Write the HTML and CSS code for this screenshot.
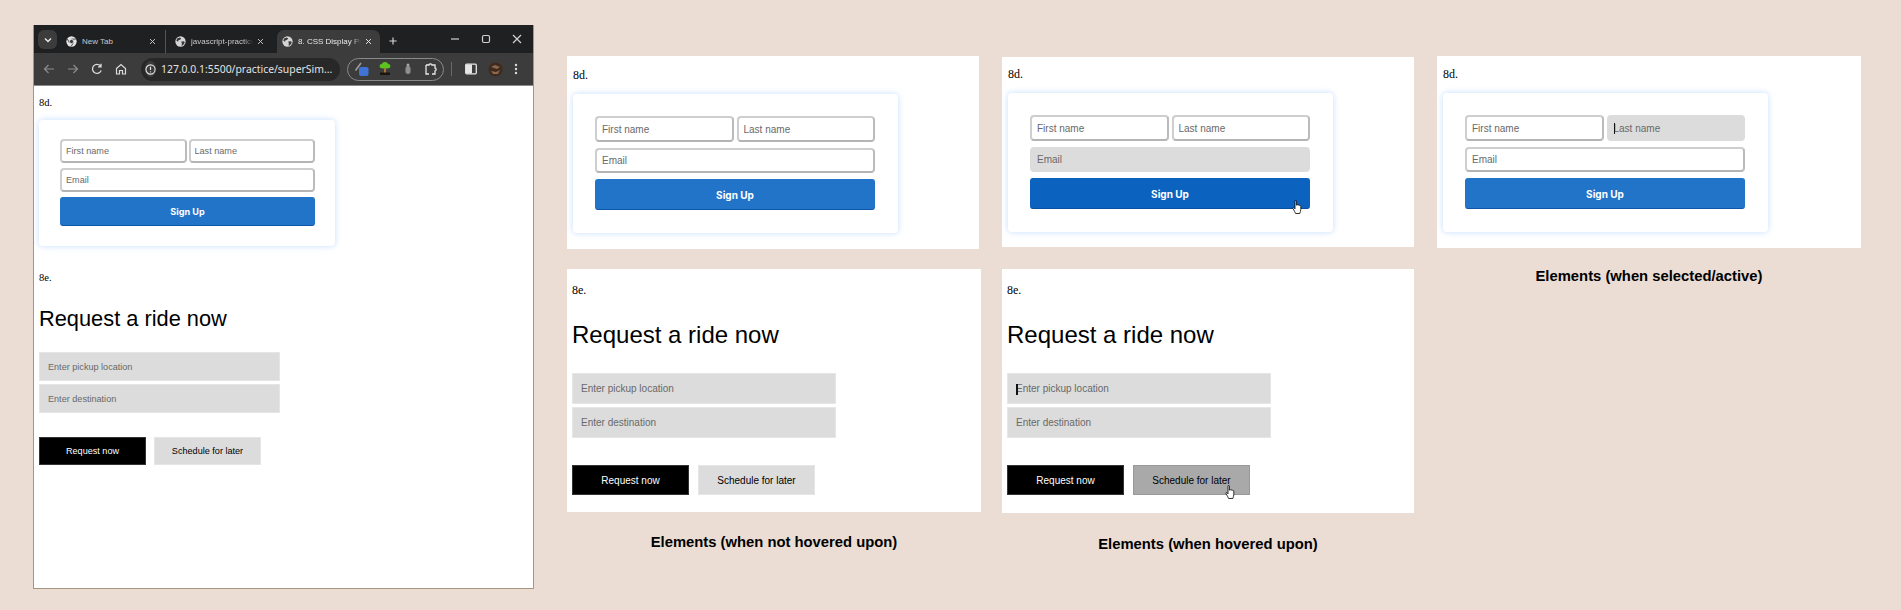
FILE: index.html
```html
<!DOCTYPE html>
<html lang="en">
<head>
    <meta charset="UTF-8">
    <meta name="viewport" content="width=device-width, initial-scale=1.0">
    <title>CSS Display Practice - Elements</title>
    <link rel="stylesheet" href="styles.css">
</head>
<body>
    <svg class="icon-defs" width="0" height="0" aria-hidden="true">
        <symbol id="globe" viewBox="0 0 16 16">
            <circle cx="8" cy="8" r="7.5" fill="#d5d5d5"/>
            <path d="M3 3.5 7 2l2 1.5-1.5 2L5 6l-.5 2.5L2 7zM9 8l4.5-.5L14 10l-2.5 3.5L9.5 14l.5-3z" fill="#3a3a3a"/>
        </symbol>
        <symbol id="close" viewBox="0 0 10 10">
            <path d="M1.5 1.5l7 7M8.5 1.5l-7 7" fill="none" stroke="currentColor" stroke-width="1.4"/>
        </symbol>
        <symbol id="hand" viewBox="0 0 10 14">
            <path d="M3 1c0-.8 1.4-.8 1.4 0v4.2c.5-.6 1.3-.5 1.5 0 .5-.4 1.2-.3 1.4.2.6-.3 1.5 0 1.5.8v3.300c0 1.500-.7 2.500-1 4H3.600C3.200 12 1.900 10.500 1 8.700c-.4-.9.5-1.500 1.200-.8l.8.9z" fill="#fff" stroke="#000" stroke-width=".8"/>
        </symbol>
    </svg>

    <div class="browser">
        <div class="tabstrip">
            <div class="tab-search">
                <svg width="8" height="6" viewBox="0 0 8 6"><path d="M1 1.5l3 3 3-3" fill="none" stroke="#e6e6e6" stroke-width="1.5"/></svg>
            </div>
            <div class="tab tab-newtab">
                <svg class="favicon" viewBox="0 0 16 16">
                    <circle cx="8" cy="8" r="7.5" fill="#e4e4e4"/>
                    <path d="M8 4.5h6.500M5 9.700 1.800 4.300M10.800 9.800 7.500 15" stroke="#3a3a3a" stroke-width="1.3"/>
                    <circle cx="8" cy="8" r="3" fill="#3a3a3a" stroke="#e4e4e4"/>
                </svg>
                <span class="tab-title">New Tab</span>
                <svg class="tab-close"><use href="#close"/></svg>
            </div>
            <div class="tab tab-repo">
                <svg class="favicon"><use href="#globe"/></svg>
                <span class="tab-title tab-title-fade">javascript-practice</span>
                <svg class="tab-close"><use href="#close"/></svg>
            </div>
            <div class="tab tab-active">
                <svg class="favicon"><use href="#globe"/></svg>
                <span class="tab-title tab-title-fade">8. CSS Display Practice</span>
                <svg class="tab-close"><use href="#close"/></svg>
            </div>
            <svg class="new-tab" width="8" height="8" viewBox="0 0 10 10"><path d="M5 .5v9M.5 5h9" stroke="#d8d8d8" stroke-width="1.4"/></svg>
            <div class="window-controls">
                <svg width="10" height="10" viewBox="0 0 10 10"><path d="M1 5h8" stroke="#d0d0d0" stroke-width="1.2"/></svg>
                <svg width="10" height="10" viewBox="0 0 10 10"><rect x="1.5" y="1.5" width="7" height="7" rx="1.5" fill="none" stroke="#d0d0d0" stroke-width="1.2"/></svg>
                <svg width="10" height="10" viewBox="0 0 10 10"><path d="M1 1l8 8M9 1 1 9" stroke="#d0d0d0" stroke-width="1.2"/></svg>
            </div>
        </div>

        <div class="toolbar">
            <svg class="nav-icon" viewBox="0 0 12 12"><path d="M11 6H1.500M5.500 2 1.500 6l4 4" fill="none" stroke="#8c8c8c" stroke-width="1.2"/></svg>
            <svg class="nav-icon" viewBox="0 0 12 12"><path d="M1 6h9.500M6.500 2l4 4-4 4" fill="none" stroke="#8c8c8c" stroke-width="1.2"/></svg>
            <svg class="nav-icon" viewBox="0 0 12 12"><path d="M10.200 7.500A4.500 4.500 0 1 1 9.500 3M10 .8v3H7" fill="none" stroke="#dcdcdc" stroke-width="1.3"/></svg>
            <svg class="nav-icon" viewBox="0 0 12 12"><path d="M1.500 5.500 6 1.500l4.500 4V11h-3V7.500h-3V11h-3z" fill="none" stroke="#dcdcdc" stroke-width="1.2"/></svg>
            <div class="omnibox">
                <span class="site-info">
                    <svg width="11" height="11" viewBox="0 0 12 12"><circle cx="6" cy="6" r="5" fill="none" stroke="#e6e6e6" stroke-width="1.2"/><path d="M6 3v3.500" stroke="#e6e6e6" stroke-width="1.3"/><circle cx="6" cy="8.5" r=".7" fill="#e6e6e6"/></svg>
                </span>
                <span class="url">127.0.0.1:5500/practice/superSim...</span>
                <svg width="12" height="12" viewBox="0 0 12 12"><path d="M6 1l1.500 3.400 3.700.4-2.800 2.400.8 3.600L6 8.900 2.800 10.800l.8-3.600L.8 4.800l3.700-.4z" fill="none" stroke="#e6e6e6" stroke-width="1.1"/></svg>
            </div>
            <div class="extensions">
                <svg class="ext-icon" viewBox="0 0 14 14">
                    <path d="M.5 8.500 6 1" stroke="#9a9a9a" stroke-width="1.6"/>
                    <rect x="4" y="5" width="9.500" height="9" rx="2" fill="#3f74d6"/>
                </svg>
                <svg class="ext-icon" viewBox="0 0 14 14">
                    <path d="M7 0c2 0 3 1 3 2 2 0 3 1.500 2 3.500-1 1.500-9 1.500-10 0C1 3.500 2 2 4 2c0-1 1-2 3-2z" fill="#5fc11f"/>
                    <path d="M6 6.500h2V11H6z" fill="#b0743a"/>
                    <path d="M2 10.500h10V13H2z" fill="#1c1510"/>
                </svg>
                <svg class="ext-icon" viewBox="0 0 14 14"><rect x="4.500" y="4" width="5" height="8" rx="2.500" fill="#8f8f8f"/><circle cx="7" cy="3" r="1.500" fill="#a5a5a5"/></svg>
                <svg class="ext-icon" viewBox="0 0 14 14"><path d="M2 3h3c0-1.500 3-1.500 3 0h3v3c1.500 0 1.500 3 0 3v3H8M5 12H2V3" fill="none" stroke="#e6e6e6" stroke-width="1.3"/></svg>
            </div>
            <span class="toolbar-sep"></span>
            <svg class="side-panel" width="12" height="12" viewBox="0 0 12 12"><rect x=".7" y="1.200" width="10.600" height="9.600" rx="1" fill="none" stroke="#e6e6e6" stroke-width="1.3"/><rect x="1" y="1.500" width="6" height="9" fill="#e6e6e6"/></svg>
            <svg class="avatar" width="15" height="15" viewBox="0 0 15 15">
                <circle cx="7.5" cy="7.5" r="7" fill="#3f2a1d"/>
                <path d="M3 5l4-2 5 2-3 2zM3 9l5 1 4-2-2 4-5 0z" fill="#8a6a4c"/>
            </svg>
            <svg class="menu-dots" width="4" height="12" viewBox="0 0 4 12"><circle cx="2" cy="2" r="1.200" fill="#dcdcdc"/><circle cx="2" cy="6" r="1.200" fill="#dcdcdc"/><circle cx="2" cy="10" r="1.200" fill="#dcdcdc"/></svg>
        </div>

        <div class="page">
            <p class="label">8d.</p>
            <div class="signup-card">
                <div class="signup-form">
                    <input class="field" type="text" placeholder="First name">
                    <input class="field" type="text" placeholder="Last name">
                    <input class="field field-wide" type="text" placeholder="Email">
                    <button class="signup-btn">Sign Up</button>
                </div>
            </div>
            <p class="label label-ride">8e.</p>
            <h2 class="ride-title">Request a ride now</h2>
            <div class="ride-fields">
                <input class="ride-input" type="text" placeholder="Enter pickup location">
                <input class="ride-input" type="text" placeholder="Enter destination">
            </div>
            <div class="ride-actions">
                <button class="ride-btn ride-btn-dark">Request now</button>
                <button class="ride-btn">Schedule for later</button>
            </div>
        </div>
    </div>

    <div class="column column-idle">
        <section class="panel panel-signup">
            <p class="label">8d.</p>
            <div class="signup-card">
                <div class="signup-form">
                    <input class="field" type="text" placeholder="First name">
                    <input class="field" type="text" placeholder="Last name">
                    <input class="field field-wide" type="text" placeholder="Email">
                    <button class="signup-btn">Sign Up</button>
                </div>
            </div>
        </section>
        <section class="panel panel-ride">
            <p class="label">8e.</p>
            <h2 class="ride-title">Request a ride now</h2>
            <div class="ride-fields">
                <input class="ride-input" type="text" placeholder="Enter pickup location">
                <input class="ride-input" type="text" placeholder="Enter destination">
            </div>
            <div class="ride-actions">
                <button class="ride-btn ride-btn-dark">Request now</button>
                <button class="ride-btn">Schedule for later</button>
            </div>
        </section>
        <h3 class="caption">Elements (when not hovered upon)</h3>
    </div>

    <div class="column column-hover">
        <section class="panel panel-signup">
            <p class="label">8d.</p>
            <div class="signup-card">
                <div class="signup-form">
                    <input class="field" type="text" placeholder="First name">
                    <input class="field" type="text" placeholder="Last name">
                    <input class="field field-wide field-grey" type="text" placeholder="Email">
                    <button class="signup-btn signup-btn-hover">
                        Sign Up
                        <svg class="hand hand-signup"><use href="#hand"/></svg>
                    </button>
                </div>
            </div>
        </section>
        <section class="panel panel-ride">
            <p class="label">8e.</p>
            <h2 class="ride-title">Request a ride now</h2>
            <div class="ride-fields">
                <div class="caret-wrap">
                    <input class="ride-input" type="text" placeholder="Enter pickup location">
                    <span class="caret caret-ride"></span>
                </div>
                <input class="ride-input" type="text" placeholder="Enter destination">
            </div>
            <div class="ride-actions">
                <button class="ride-btn ride-btn-dark">Request now</button>
                <button class="ride-btn ride-btn-hover">
                    Schedule for later
                    <svg class="hand hand-ride"><use href="#hand"/></svg>
                </button>
            </div>
        </section>
        <h3 class="caption">Elements (when hovered upon)</h3>
    </div>

    <div class="column column-active">
        <section class="panel panel-signup">
            <p class="label">8d.</p>
            <div class="signup-card">
                <div class="signup-form">
                    <input class="field" type="text" placeholder="First name">
                    <div class="caret-wrap">
                        <input class="field field-grey" type="text" placeholder="Last name">
                        <span class="caret caret-signup"></span>
                    </div>
                    <input class="field field-wide" type="text" placeholder="Email">
                    <button class="signup-btn">Sign Up</button>
                </div>
            </div>
        </section>
        <h3 class="caption">Elements (when selected/active)</h3>
    </div>
</body>
</html>
```

FILE: styles.css
```css
* {
    box-sizing: border-box;
}
body {
    margin: 0;
    width: 1901px;
    height: 610px;
    overflow: hidden;
    display: flex;
    align-items: flex-start;
    padding-left: 33px;
    background-color: #ebddd3;
    font-family: "Liberation Sans", Arial, sans-serif;
}
.icon-defs {
    position: absolute;
}
input::placeholder {
    color: #696969;
}

/* browser window on the left */
.browser {
    width: 501px;
    height: 564px;
    margin-top: 25px;
    border: 1px solid #a8957f;
    border-top: 0;
    background-color: #fff;
    flex-shrink: 0;
}
.tabstrip {
    height: 28px;
    display: flex;
    align-items: flex-end;
    padding-left: 4px;
    background-color: #1f2021;
    color: #c8c8c8;
}
.tab-search {
    width: 19px;
    height: 19px;
    margin-bottom: 4px;
    display: flex;
    align-items: center;
    justify-content: center;
    border-radius: 6px;
    background-color: #3c3c3c;
}
.tab {
    height: 23px;
    display: flex;
    align-items: center;
    font-size: 8px;
}
.tab-newtab {
    width: 109px;
    padding: 0 9px;
    border-right: 1px solid #555;
}
.tab-repo {
    width: 111px;
    padding: 0 13px 0 9px;
}
.tab-active {
    width: 103px;
    padding: 0 8px 0 5px;
    border-radius: 7px 7px 0 0;
    background-color: #3c3c3c;
    color: #e8e8e8;
}
.favicon {
    width: 11px;
    height: 11px;
    margin-right: 5px;
    flex-shrink: 0;
}
.tab-title {
    flex: 1;
    overflow: hidden;
    white-space: nowrap;
}
.tab-title-fade {
    -webkit-mask-image: linear-gradient(to right, #000 85%, transparent);
    mask-image: linear-gradient(to right, #000 85%, transparent);
}
.tab-close {
    width: 7px;
    height: 7px;
    margin-left: 4px;
    flex-shrink: 0;
}
.new-tab {
    margin: 0 0 8px 9px;
}
.window-controls {
    display: flex;
    gap: 21px;
    margin: 0 0 9px auto;
    padding-right: 11px;
}
.toolbar {
    height: 33px;
    display: flex;
    align-items: center;
    padding-left: 9px;
    background-color: #3c3c3c;
    border-bottom: 1px solid #8a8a8a;
}
.nav-icon {
    width: 12px;
    height: 12px;
    margin-right: 12px;
    flex-shrink: 0;
}
.omnibox {
    width: 199px;
    height: 23px;
    margin-left: 2px;
    display: flex;
    align-items: center;
    flex-shrink: 0;
    padding: 0 9px 0 4px;
    border-radius: 12px;
    background-color: #282828;
}
.site-info {
    width: 16px;
    height: 16px;
    display: flex;
    align-items: center;
    justify-content: center;
    border-radius: 50%;
    background-color: #3c3c3c;
}
.url {
    flex: 1;
    margin-left: 5px;
    font-family: "Noto Sans", "Liberation Sans", sans-serif;
    font-size: 10.4px;
    white-space: nowrap;
    color: #e3e3e3;
}
.extensions {
    width: 97px;
    height: 23px;
    margin-left: 7px;
    display: flex;
    align-items: center;
    flex-shrink: 0;
    gap: 9px;
    padding-left: 7px;
    border: 1px solid #8a8a8a;
    border-radius: 12px;
}
.ext-icon {
    width: 14px;
    height: 14px;
    flex-shrink: 0;
}
.toolbar-sep {
    width: 1px;
    height: 14px;
    margin-left: 7px;
    background-color: #6a6a6a;
}
.side-panel {
    margin-left: 13px;
}
.avatar {
    margin-left: 11px;
}
.menu-dots {
    margin-left: 11px;
}
.page {
    padding: 10px 0 0 5px;
}
.page .label {
    font-size: 10.5px;
    line-height: 13px;
}
.page .label-ride {
    margin-top: 25px;
}
.page .signup-card {
    width: 296px;
    height: 126px;
    margin-top: 11px;
    padding: 19px 21px;
}
.page .signup-form {
    width: 255px;
    grid-template-columns: 126.5px 126.5px;
    gap: 5px 2px;
}
.page .field {
    height: 24px;
    padding: 0 4px;
    font-size: 9.1px;
}
.page .signup-btn {
    height: 29px;
    font-size: 9.1px;
}
.page .ride-title {
    margin: 22px 0 20px;
    font-size: 21.8px;
    line-height: 26px;
}
.page .ride-fields {
    width: 241px;
    gap: 3px;
}
.page .ride-input {
    height: 29px;
    padding: 0 8px;
    font-size: 9.1px;
}
.page .ride-actions {
    margin-top: 24px;
    gap: 8px;
}
.page .ride-btn {
    width: 107px;
    height: 28px;
    font-size: 9.1px;
}

/* the cropped panels */
.column {
    flex-shrink: 0;
}
.column-idle {
    width: 414px;
    margin: 56px 0 0 33px;
}
.column-hover {
    width: 412px;
    margin: 57px 0 0 21px;
}
.column-active {
    width: 424px;
    margin: 56px 0 0 23px;
}
.panel {
    background-color: #fff;
}
.panel-signup {
    height: 193px;
    padding: 12px 0 0 6px;
}
.column-idle .panel-signup {
    width: 412px;
}
.column-hover .panel-signup {
    height: 190px;
    padding-top: 10px;
}
.column-active .panel-signup {
    height: 192px;
    padding-top: 11px;
}
.panel-ride {
    height: 243px;
    margin-top: 20px;
    padding: 14px 0 0 5px;
}
.column-hover .panel-ride {
    height: 244px;
    margin-top: 22px;
}
.label {
    margin: 0;
    font-family: "Liberation Serif", "Times New Roman", serif;
    font-size: 12px;
    line-height: 14px;
    color: #000;
}
.signup-card {
    width: 325px;
    height: 139px;
    margin-top: 12px;
    padding: 22px;
    border-radius: 4px;
    background-color: #fff;
    box-shadow: 0 0 6px rgba(110, 170, 255, 0.4);
}
.signup-form {
    width: 280px;
    display: grid;
    grid-template-columns: 138.5px 138.5px;
    gap: 6px 3px;
}
.field {
    width: 100%;
    height: 26px;
    padding: 0 5px;
    border: 2px solid #cecece;
    border-bottom-color: #b4b4b4;
    border-right-color: #bbb;
    border-radius: 4px;
    background-color: #fff;
    font-family: "Liberation Sans", Arial, sans-serif;
    font-size: 10px;
    outline: none;
}
.field-wide {
    grid-column: 1 / 3;
    height: 25px;
}
.field-grey {
    border-color: #dcdcdc;
    background-color: #dcdcdc;
}
.signup-btn {
    grid-column: 1 / 3;
    position: relative;
    height: 31px;
    border: 1px solid #2274c9;
    border-bottom: 1px solid #0e56a8;
    border-radius: 3px;
    background-color: #2274c9;
    color: #fff;
    font-family: Inter, "Liberation Sans", sans-serif;
    font-size: 10px;
    font-weight: 700;
}
.signup-btn-hover {
    border-color: #0b62bf;
    border-bottom-color: #07509f;
    background-color: #0b62bf;
}
.ride-title {
    margin: 24px 0;
    font-size: 24px;
    font-weight: 400;
    line-height: 28px;
    color: #000;
}
.ride-fields {
    width: 264px;
    display: flex;
    flex-direction: column;
    gap: 3px;
}
.ride-input {
    width: 100%;
    height: 31px;
    padding: 0 8px;
    border: 1px solid #e6e6e6;
    background-color: #dcdcdc;
    font-family: "Liberation Sans", Arial, sans-serif;
    font-size: 10px;
    outline: none;
}
.ride-actions {
    display: flex;
    gap: 9px;
    margin-top: 27px;
}
.ride-btn {
    position: relative;
    width: 117px;
    height: 30px;
    padding: 0;
    border: 1px solid #e6e6e6;
    background-color: #dcdcdc;
    color: #000;
    font-family: "Liberation Sans", Arial, sans-serif;
    font-size: 10px;
}
.ride-btn-dark {
    border-color: #333;
    background-color: #000;
    color: #fff;
}
.ride-btn-hover {
    border-color: #999;
    background-color: #a9a9a9;
}
.caption {
    margin: 21px 0 0;
    font-size: 14.8px;
    font-weight: 700;
    line-height: 18px;
    text-align: center;
    color: #000;
}
.column-hover .caption {
    margin-top: 22px;
}
.column-active .caption {
    margin-top: 19px;
}

/* caret and mouse pointer sit on top of the controls */
.caret-wrap {
    position: relative;
}
.caret {
    position: absolute;
    background-color: #111;
}
.caret-ride {
    left: 9px;
    top: 11px;
    width: 2px;
    height: 11px;
}
.caret-signup {
    left: 7px;
    top: 8px;
    width: 1px;
    height: 11px;
}
.hand {
    position: absolute;
    width: 10px;
    height: 14px;
}
.hand-signup {
    right: 7px;
    bottom: -6px;
}
.hand-ride {
    left: 91px;
    bottom: -5px;
}
```
